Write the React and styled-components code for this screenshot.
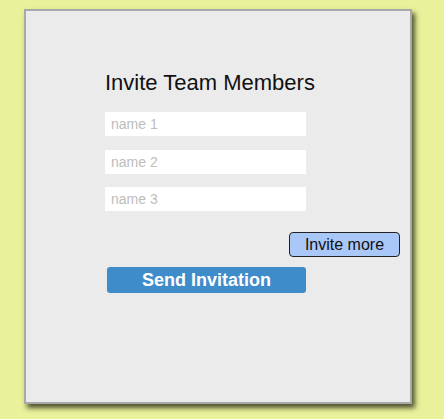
import React from "react";
import styled, { createGlobalStyle } from "styled-components";

const GlobalStyle = createGlobalStyle`
  html, body {
    margin: 0;
    padding: 0;
    background: #e9f19b;
    font-family: "Liberation Sans", Arial, sans-serif;
  }
`;

const Page = styled.div`
  padding: 9px 0 0 24px;
  height: 419px;
  box-sizing: border-box;
`;

const Panel = styled.div`
  width: 388px;
  height: 395px;
  box-sizing: border-box;
  background: #ebebeb;
  border: 2px solid #a9a9a9;
  box-shadow: 3px 4px 5px rgba(40, 40, 20, 0.8);
  padding: 59px 10px 0 79px;
  display: flex;
  flex-direction: column;
`;

const Title = styled.h2`
  margin: 0 0 17px;
  font-size: 22px;
  line-height: 25px;
  font-weight: normal;
  color: #111;
`;

const Fields = styled.div`
  display: flex;
  flex-direction: column;
  gap: 13.5px;
  width: 201px;
`;

const NameInput = styled.input`
  height: 24px;
  box-sizing: border-box;
  border: none;
  background: #fff;
  padding: 0 6px;
  font-family: inherit;
  font-size: 14px;
  outline: none;
  &::placeholder {
    color: #bdbdbd;
  }
`;

const MoreRow = styled.div`
  display: flex;
  justify-content: flex-end;
  margin-top: 21px;
`;

const MoreButton = styled.button`
  width: 111px;
  height: 25px;
  box-sizing: border-box;
  background: #a9c7f7;
  border: 1px solid #222;
  border-radius: 4px;
  font-family: inherit;
  font-size: 16px;
  color: #111;
  padding: 0;
`;

const SendButton = styled.button`
  margin: 10px 0 0 2px;
  width: 199px;
  height: 26px;
  box-sizing: border-box;
  background: #3f8ccb;
  border: none;
  border-radius: 3px;
  font-family: inherit;
  font-size: 18px;
  font-weight: bold;
  color: #fff;
  padding: 0;
`;

export default function App() {
  return (
    <>
      <GlobalStyle />
      <Page>
        <Panel>
          <Title>Invite Team Members</Title>
          <Fields>
            <NameInput placeholder="name 1" />
            <NameInput placeholder="name 2" />
            <NameInput placeholder="name 3" />
          </Fields>
          <MoreRow>
            <MoreButton>Invite more</MoreButton>
          </MoreRow>
          <SendButton>Send Invitation</SendButton>
        </Panel>
      </Page>
    </>
  );
}
